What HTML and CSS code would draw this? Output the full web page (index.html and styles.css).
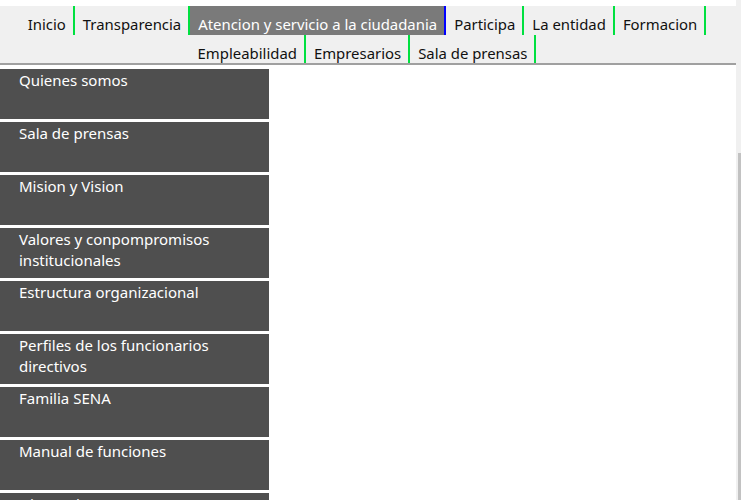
FILE: index.html
```html
<!DOCTYPE html>
<html lang="es">
<head>
<meta charset="utf-8">
<title>SENA</title>
<link rel="stylesheet" href="styles.css">
</head>
<body>
<div class="frame">
  <div class="page">
    <nav class="topnav">
      <ul class="nav-row">
        <li class="nav-item">Inicio</li>
        <li class="nav-item">Transparencia</li>
        <li class="nav-item active">Atencion y servicio a la ciudadania</li>
        <li class="nav-item">Participa</li>
        <li class="nav-item">La entidad</li>
        <li class="nav-item">Formacion</li>
      </ul>
      <ul class="nav-row">
        <li class="nav-item">Empleabilidad</li>
        <li class="nav-item">Empresarios</li>
        <li class="nav-item">Sala de prensas</li>
      </ul>
    </nav>
    <ul class="sidebar">
      <li class="side-item">Quienes somos</li>
      <li class="side-item">Sala de prensas</li>
      <li class="side-item">Mision y Vision</li>
      <li class="side-item">Valores y conpompromisos institucionales</li>
      <li class="side-item">Estructura organizacional</li>
      <li class="side-item">Perfiles de los funcionarios directivos</li>
      <li class="side-item">Familia SENA</li>
      <li class="side-item">Manual de funciones</li>
      <li class="side-item">Directorio SENA</li>
    </ul>
  </div>
  <div class="scrollbar">
    <div class="scroll-thumb"></div>
  </div>
</div>
</body>
</html>
```

FILE: styles.css
```css
html, body {
  margin: 0;
  padding: 0;
  background: #ffffff;
  overflow: hidden;
}

body {
  font-family: "Noto Sans", "Open Sans", sans-serif;
  font-size: 15px;
  color: #111111;
}

.frame {
  display: flex;
  height: 500px;
  overflow: hidden;
}

.page {
  flex: 1;
  padding-top: 6px;
  overflow: hidden;
}

.topnav {
  background: #f0f0f0;
  border-bottom: 2px solid #a0a0a0;
  padding-right: 10px;
}

.nav-row {
  list-style: none;
  margin: 0;
  padding: 0;
  display: flex;
  justify-content: center;
}

.nav-item {
  height: 29px;
  box-sizing: border-box;
  padding: 8px 7px 0 8px;
  line-height: 20px;
  border-right: 2px solid #00e040;
  white-space: nowrap;
  font-size: 14.9px;
}

.nav-row:last-child .nav-item {
  height: 28px;
}

.nav-item.active {
  background: #7a7a7a;
  color: #ffffff;
  border-right-color: #0000ff;
}

.sidebar {
  list-style: none;
  margin: 4px 0 0 0;
  padding: 0;
  width: 269px;
  display: flex;
  flex-direction: column;
  gap: 3px;
}

.side-item {
  background: #4f4f4f;
  color: #ffffff;
  height: 50px;
  box-sizing: border-box;
  padding: 1px 10px 0 19px;
  line-height: 21px;
}

.scrollbar {
  width: 5px;
  background: #f0f0f0;
  display: flex;
  flex-direction: column;
  align-items: flex-end;
  padding-top: 153px;
  box-sizing: border-box;
}

.scroll-thumb {
  width: 3px;
  flex: 1;
  background: #c2c2c2;
}
```
